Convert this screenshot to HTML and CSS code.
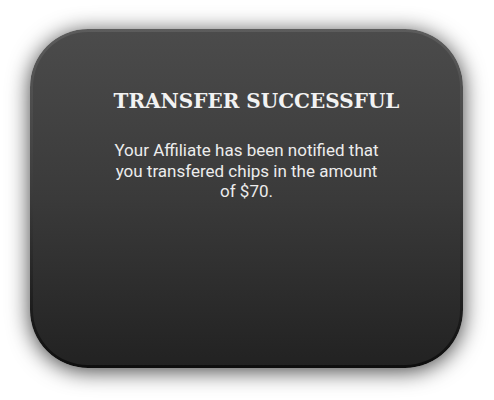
FILE: index.html
```html
<!DOCTYPE html>
<html>
<head>
<meta charset="utf-8">
<link rel="stylesheet" href="styles.css">
</head>
<body>
<div class="frame">
  <div class="dialog">
    <h1 class="title">TRANSFER SUCCESSFUL</h1>
    <p class="message">Your Affiliate has been notified that you transfered chips in the amount of $70.</p>
  </div>
</div>
</body>
</html>
```
FILE: styles.css
```css
html, body {
  margin: 0;
  padding: 0;
  background: #ffffff;
}
body {
  width: 494px;
  height: 400px;
  overflow: hidden;
}
.frame {
  margin: 29px 0 0 30px;
  width: 433px;
  height: 339px;
  box-sizing: border-box;
  padding: 3px;
  border-radius: 58px;
  background: linear-gradient(#5c5c5c, #3a3a3a 50%, #0e0e0e);
  box-shadow: 0 3px 22px rgba(0, 0, 0, 0.75);
}
.dialog {
  height: 100%;
  box-sizing: border-box;
  border-radius: 55px;
  background: linear-gradient(#4b4b4b, #3a3a3a 50%, #222222);
  display: flex;
  flex-direction: column;
  align-items: center;
  padding-top: 57px;
}
.title {
  margin: 0 0 0 20px;
  font-family: "DejaVu Serif", serif;
  font-weight: bold;
  font-size: 20px;
  line-height: 24px;
  color: #f2f2f2;
  letter-spacing: 0;
}
.message {
  margin: 27px 0 0 0;
  width: 274px;
  font-family: Roboto, "Liberation Sans", sans-serif;
  font-size: 17px;
  line-height: 20.5px;
  text-align: center;
  color: #ececec;
}
```
